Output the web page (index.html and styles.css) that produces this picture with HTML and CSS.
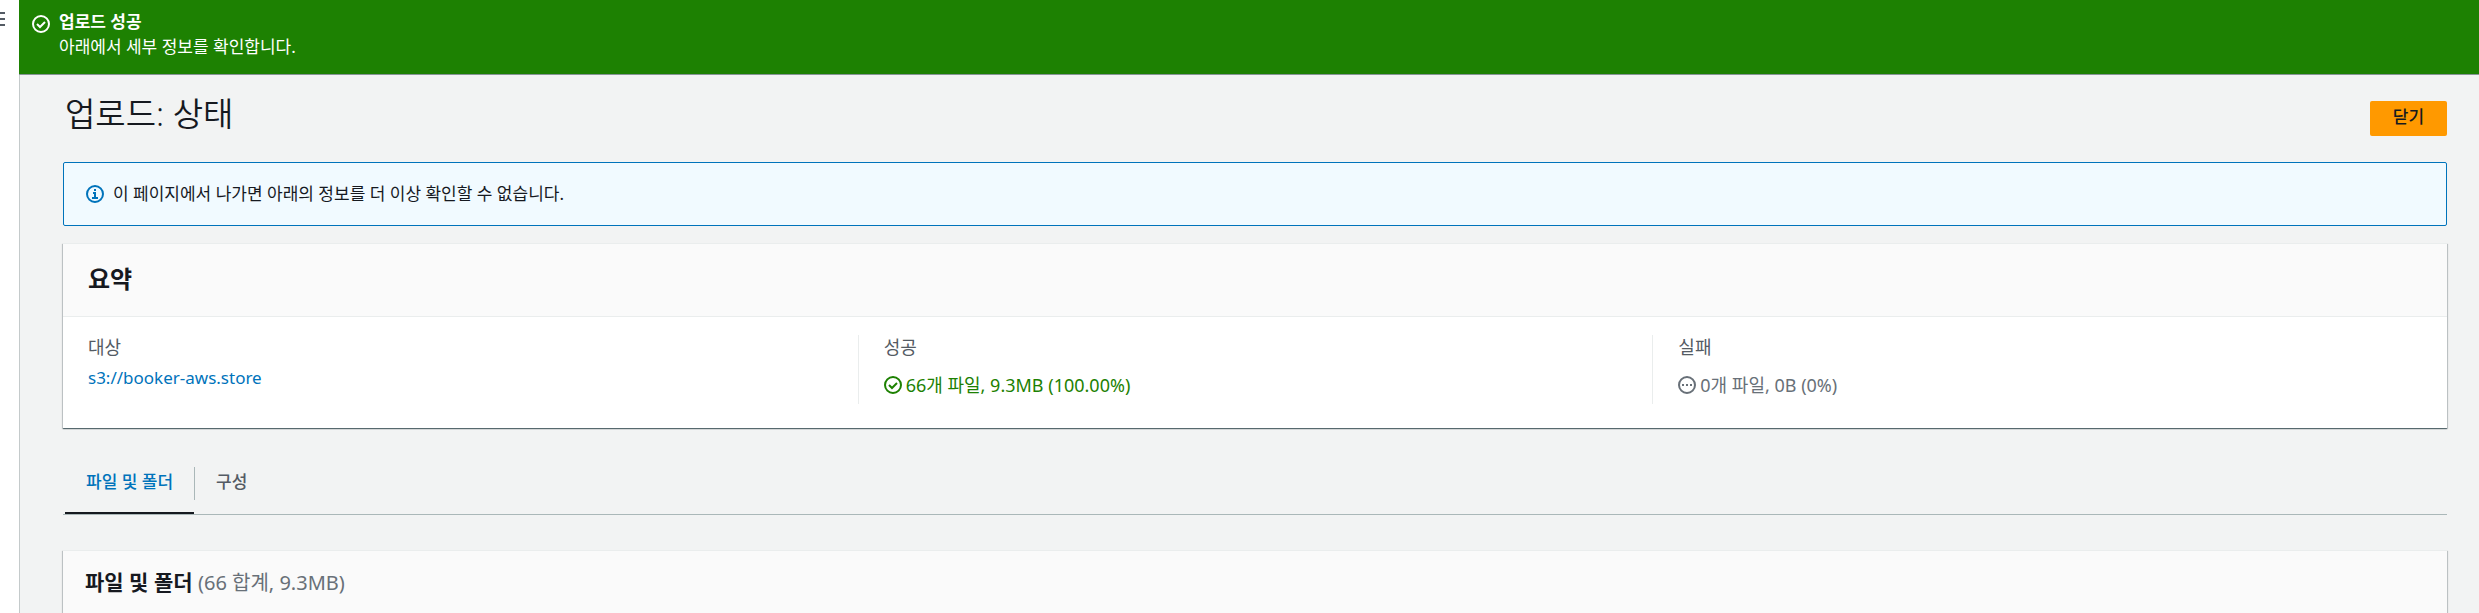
FILE: index.html
```html
<!DOCTYPE html>
<html lang="ko">
<head>
    <meta charset="UTF-8">
    <meta name="viewport" content="width=device-width, initial-scale=1.0">
    <title>업로드: 상태</title>
    <link rel="stylesheet" href="styles.css">
</head>
<body>
    <div class="app">
        <aside class="side-nav">
            <button type="button" class="nav-toggle" aria-label="메뉴">
                <svg width="20" height="18" viewBox="0 0 20 18"><path d="M0 3h20M0 9h20M0 15h20"/></svg>
            </button>
        </aside>

        <div class="page">
            <div class="flash" role="status">
                <svg class="icon" viewBox="0 0 18 18"><circle cx="9" cy="9" r="8"/><path d="M5 9l3 3 5-5"/></svg>
                <div class="flash-text">
                    <strong>업로드 성공</strong>
                    <p>아래에서 세부 정보를 확인합니다.</p>
                </div>
            </div>

            <main class="content">
                <div class="page-header">
                    <h1>업로드: 상태</h1>
                    <button type="button" class="btn-primary">닫기</button>
                </div>

                <div class="alert">
                    <svg class="icon" viewBox="0 0 18 18"><circle cx="9" cy="9" r="8"/><path d="M7 8h2v5M6 13h6M8 5h2"/></svg>
                    <p>이 페이지에서 나가면 아래의 정보를 더 이상 확인할 수 없습니다.</p>
                </div>

                <section class="card">
                    <div class="card-header">
                        <h2>요약</h2>
                    </div>
                    <div class="summary">
                        <div class="summary-col">
                            <div class="label">대상</div>
                            <a class="target" href="#">s3://booker-aws.store</a>
                        </div>
                        <div class="summary-col">
                            <div class="label">성공</div>
                            <div class="status success">
                                <svg class="icon" viewBox="0 0 18 18"><circle cx="9" cy="9" r="8"/><path d="M5 9l3 3 5-5"/></svg>
                                <span>66개 파일, 9.3MB (100.00%)</span>
                            </div>
                        </div>
                        <div class="summary-col">
                            <div class="label">실패</div>
                            <div class="status inactive">
                                <svg class="icon" viewBox="0 0 18 18"><circle cx="9" cy="9" r="8"/><path d="M4 9h2M8 9h2M12 9h2"/></svg>
                                <span>0개 파일, 0B (0%)</span>
                            </div>
                        </div>
                    </div>
                </section>

                <div class="tabs" role="tablist">
                    <button type="button" class="tab active" role="tab" aria-selected="true"><span>파일 및 폴더</span></button>
                    <button type="button" class="tab" role="tab" aria-selected="false"><span>구성</span></button>
                </div>

                <section class="card">
                    <div class="card-header files-header">
                        <h3>파일 및 폴더 <span class="count">(66 합계, 9.3MB)</span></h3>
                    </div>
                </section>
            </main>
        </div>
    </div>
</body>
</html>
```

FILE: styles.css
```css
* {
    box-sizing: border-box;
}
body {
    margin: 0;
    font-family: "Noto Sans", "Noto Sans CJK KR", sans-serif;
    font-size: 17px;
    line-height: 26px;
    color: #16191f;
    background-color: #f2f3f3;
}
h1, h2, h3, p {
    margin: 0;
}
button {
    font-family: inherit;
    font-size: 17px;
    line-height: 26px;
    cursor: pointer;
}
svg {
    fill: none;
    stroke: currentColor;
    stroke-width: 2;
}
.icon {
    width: 18px;
    height: 18px;
    flex: none;
}
.app {
    display: flex;
    min-height: 100vh;
    overflow: hidden;
}

/* collapsed navigation */
.side-nav {
    flex: none;
    width: 20px;
    background-color: #fff;
    border-right: 1px solid #c4cacb;
}
.nav-toggle {
    display: block;
    margin: 10px 0 0 -15px;
    padding: 0;
    border: none;
    background: none;
    color: #545b64;
    line-height: 0;
}
.page {
    flex: 1;
    min-width: 0;
}

/* success banner */
.flash {
    display: flex;
    gap: 9px;
    margin-left: -1px;
    padding: 9px 13px 13px;
    min-height: 75px;
    color: #fff;
    background-color: #1d8102;
    border-bottom: 1px solid #879596;
}
.flash .icon {
    margin-top: 6px;
}
.flash strong {
    display: block;
    line-height: 25px;
}
.content {
    padding: 18px 32px 0 43px;
}
.page-header {
    display: flex;
    justify-content: space-between;
    align-items: flex-start;
    height: 69px;
    padding-left: 2px;
}
h1 {
    font-size: 33px;
    font-weight: 350;
    line-height: 42px;
}
.btn-primary {
    min-width: 77px;
    height: 35px;
    margin-top: 8px;
    padding: 0 20px 4px;
    border: none;
    border-radius: 2px;
    background-color: #ff9900;
    color: #16191f;
    font-weight: 500;
}

/* info box */
.alert {
    display: flex;
    align-items: center;
    gap: 9px;
    min-height: 64px;
    padding: 0 22px;
    border: 1px solid #0073bb;
    border-radius: 2px;
    background-color: #f1faff;
}
.alert .icon {
    color: #0073bb;
}

.card {
    margin-top: 17px;
    background-color: #fff;
    border-top: 1px solid #eaeded;
    box-shadow: 0 1px 1px 0 rgba(0, 28, 36, 0.5), 1px 1px 1px 0 rgba(0, 28, 36, 0.15), -1px 1px 1px 0 rgba(0, 28, 36, 0.15);
}
.card-header {
    padding: 18px 25px 21px;
    background-color: #fafafa;
    border-bottom: 1px solid #eaeded;
}
h2 {
    font-size: 24px;
    line-height: 33px;
}
.summary {
    display: grid;
    grid-template-columns: repeat(3, 1fr);
    padding: 18px 0 24px;
}
.summary-col {
    min-height: 69px;
    padding-left: 25px;
}
.summary-col + .summary-col {
    border-left: 1px solid #eaeded;
}
.label {
    color: #545b64;
    font-size: 18px;
    line-height: 24px;
}
.target {
    display: block;
    margin-top: 6px;
    color: #0073bb;
    text-decoration: none;
}
.status {
    display: flex;
    align-items: center;
    gap: 4px;
    margin-top: 13px;
    font-size: 18px;
}
.success {
    color: #1d8102;
}
.inactive {
    color: #687078;
}

/* tabs */
.tabs {
    display: flex;
    margin-top: 34px;
    padding-left: 2px;
    border-bottom: 1px solid #aab7b8;
}
.tab {
    padding: 5px 0 12px;
    border: none;
    border-bottom: 2px solid transparent;
    background: none;
    color: #545b64;
    font-weight: 500;
}
.tab span {
    display: block;
    padding: 2px 21px 5px;
}
.tab + .tab span {
    border-left: 1px solid #aab7b8;
}
.tab.active {
    color: #0073bb;
    border-bottom-color: #16191f;
}
.tabs + .card {
    margin-top: 35px;
}
.files-header {
    padding: 15px 22px;
}
h3 {
    font-size: 21px;
    line-height: 32px;
}
.count {
    color: #687078;
    font-size: 20px;
    font-weight: 400;
}
```
